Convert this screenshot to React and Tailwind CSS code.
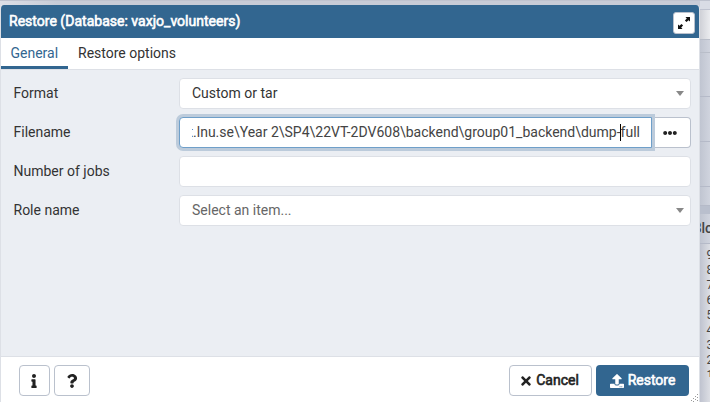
import { FaTimes, FaUpload, FaInfo, FaQuestion, FaEllipsisH } from 'react-icons/fa';

function Label({ children }) {
  return <div className="w-[178px] shrink-0 pl-[12.5px] text-[#333]">{children}</div>;
}

function Caret() {
  return (
    <svg width="8" height="5" viewBox="0 0 8 5" className="shrink-0">
      <path d="M0 0h8L4 5z" fill="#888" />
    </svg>
  );
}

const field = 'h-[31px] flex items-center bg-white border border-[#dde0e6] rounded-[4px]';
const heavy = '[-webkit-text-stroke:0.6px_currentColor]';

function Row({ label, children }) {
  return (
    <div className="flex items-center h-[31px]">
      <Label>{label}</Label>
      {children}
    </div>
  );
}

const counts = ['9', '8', '7', '6', '5', '4', '3', '2', '1'];

function Backdrop() {
  return (
    <div className="flex flex-col w-[710px] h-[402px] bg-linear-to-r from-[#dcdfe7] via-[#c8ccd7] via-8% to-[#c8ccd7]">
      <div className="h-px w-full bg-[#bfc3cf] shrink-0" />
      <div className="flex flex-col ml-auto w-[10px] flex-1 bg-linear-to-r from-[#c0c5d1] to-[#d0d4de]">
        <div className="h-[9px] shrink-0 border-b border-[#bfc3d0] bg-[#d9dce5]" />
        <div className="h-[30px] shrink-0 border-b border-[#b9bec9] bg-linear-to-r from-[#cfd1d7] to-[#ebecef]" />
        <div className="h-[13px] shrink-0 border-b border-[#b9bec9]" />
        <div className="h-[44px] shrink-0 border-b border-[#b5bac8]" />
        <div className="h-[45px] shrink-0 border-b border-[#b5bac8]" />
        <div className="h-[45px] shrink-0 border-b border-[#b5bac8]" />
        <div className="h-[19px] shrink-0 border-b border-[#b5bac8]" />
        <div className="h-[8px] shrink-0 bg-[#b9bfcd]" />
        <div className="h-[30px] shrink-0 border-b border-[#b5bac8] overflow-hidden flex items-center justify-end text-[14px] font-medium text-[#444] whitespace-nowrap">
          <span className="mr-[-3px]">Blo</span>
        </div>
        <div className="flex-1 pt-1 overflow-hidden bg-linear-to-r from-[#bfc3cf] to-[#dcdee4] text-[12px] leading-[15px] text-[#444]">
          {counts.map((n) => (
            <div key={n} className="pl-[6.5px] h-[15px] overflow-hidden last:h-[9px]">{n}</div>
          ))}
        </div>
      </div>
    </div>
  );
}

export default function App() {
  return (
    <div className="relative w-[710px] h-[402px] overflow-hidden font-['Roboto',sans-serif] text-[14px] leading-[21px]">
      <Backdrop />
      <div className="absolute left-0 top-[5px] w-[700px] h-[400px] flex flex-col rounded-t-[4px] bg-white border-x border-[#dde0e6] overflow-hidden">
        <div className="h-[33px] shrink-0 -mx-px pl-[9px] pr-[5px] flex items-center justify-between bg-[#326690] text-white">
          <span className={heavy + ' tracking-[0.02px]'}>Restore (Database: vaxjo_volunteers)</span>
          <button className="mt-[3px] size-[22px] rounded-[3px] bg-white border border-[#bac1cd] flex items-center justify-center">
            <svg width="14" height="14" viewBox="0 0 14 14" fill="#111">
              <path d="M8.5 1H13v4.5l-1.5-1.3-2 1.9-1.6-1.6 1.9-2zM5.5 13H1V8.5l1.5 1.3 2-1.9 1.6 1.6-1.9 2z" />
            </svg>
          </button>
        </div>
        <div className="h-[32px] shrink-0 flex border-b border-[#dde0e6] bg-white">
          <div className="w-[67px] h-[31px] pl-[9.5px] pt-[5px] border-b-[3px] border-[#326690] text-[#326690]">General</div>
          <div className="pl-[10px] pt-[5px] text-[#333]">Restore options</div>
        </div>
        <div className="flex-1 bg-[#ebeef3] pr-[8px] pt-[8px] flex flex-col gap-[8px]">
          <Row label="Format">
            <div className={field + ' flex-1 pl-[12px] pr-[6px] justify-between text-[#333]'}>
              <span>Custom or tar</span>
              <Caret />
            </div>
          </Row>
          <Row label="Filename">
            <div className="flex-1 flex">
              <div className="relative z-10 h-[31px] w-[473px] pl-[12px] pr-[11px] flex items-center bg-white border border-[#6f9fc9] rounded-l-[4px] shadow-[0_0_0_3px_#bccbdb] text-[#444]">
                <div className="w-full flex justify-end overflow-hidden whitespace-nowrap">
                  <span className="shrink-0">t.lnu.se\Year 2\SP4\22VT-2DV608\backend\group01_backend\dump-</span>
                  <span className="shrink-0 h-[17px] self-center border-l border-black -ml-px" />
                  <span className="shrink-0">full</span>
                </div>
              </div>
              <button className="flex-1 h-[31px] pr-[2px] flex items-center justify-center bg-white border border-l-0 border-[#bac1cd] rounded-r-[4px]">
                <FaEllipsisH size={14} color="#222" />
              </button>
            </div>
          </Row>
          <Row label="Number of jobs">
            <div className={field + ' flex-1'} />
          </Row>
          <Row label="Role name">
            <div className={field + ' flex-1 pl-[12px] pr-[6px] justify-between text-[#666]'}>
              <span>Select an item...</span>
              <Caret />
            </div>
          </Row>
        </div>
        <div className="relative h-[49px] shrink-0 border-t border-[#dde0e6] bg-white flex items-start pt-[8px] pl-[18px] pr-[10px] text-[#222]">
          <button className="w-[31px] h-[31px] pr-px flex items-center justify-center border border-[#bac1cd] rounded-[4px]">
            <FaInfo size={14} />
          </button>
          <button className="ml-[4px] w-[36px] h-[31px] flex items-center justify-center border border-[#bac1cd] rounded-[4px]">
            <FaQuestion size={14} />
          </button>
          <button className="ml-auto w-[83px] h-[31px] pr-[3px] flex items-center justify-center gap-[3px] border border-[#bac1cd] rounded-[4px]">
            <FaTimes size={14} />
            <span className={heavy}>Cancel</span>
          </button>
          <button className="ml-[4px] w-[93px] h-[31px] flex items-center justify-center gap-[4px] bg-[#326690] text-white rounded-[4px]">
            <FaUpload size={14} />
            <span className={heavy}>Restore</span>
          </button>
          <svg className="absolute right-0 top-[37px]" width="8" height="8" fill="#999">
            <path d="M6 0h1v1h-1zM4 2h1v1h-1zM6 3h1v1h-1zM2 4h1v1h-1zM4 5h1v1h-1zM6 6h1v1h-1zM0 6h1v1h-1zM2 7h1v1h-1z" />
          </svg>
        </div>
      </div>
    </div>
  );
}
